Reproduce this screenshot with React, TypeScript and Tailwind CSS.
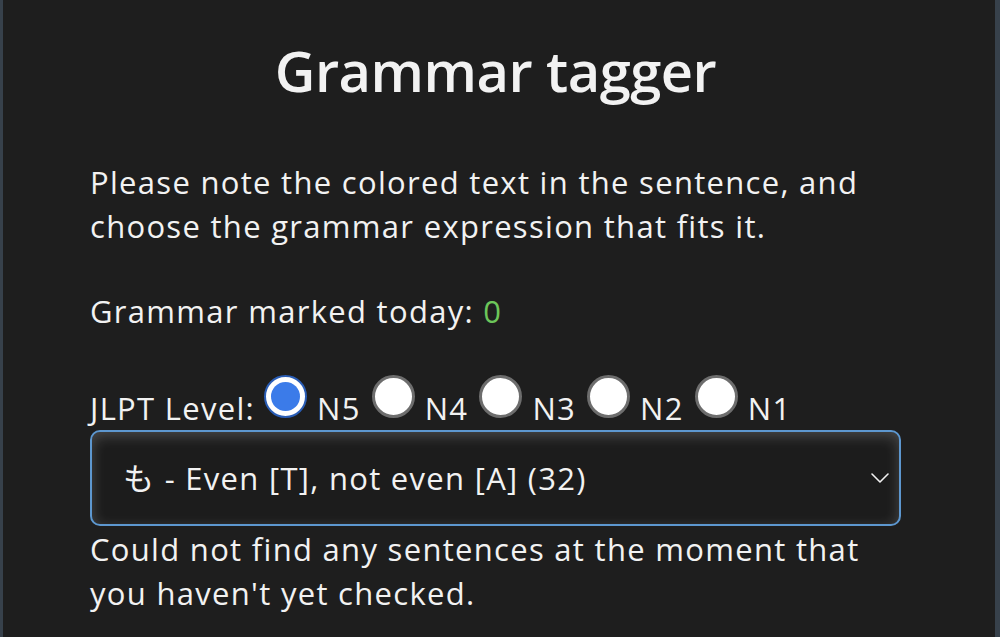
import React, { useState } from "react";

const levels = ["N5", "N4", "N3", "N2", "N1"];

function Radio({ checked }: { checked: boolean }) {
  if (checked) {
    return (
      <span className="inline-block align-baseline mb-[2px] w-[43px] h-[43px] rounded-full border-[2px] border-[#2a5db5] bg-white p-[5px]">
        <span className="block w-full h-full rounded-full bg-[#3b7be9]" />
      </span>
    );
  }
  return (
    <span className="inline-block align-baseline mb-[2px] w-[43px] h-[43px] rounded-full border-[3px] border-[#6d6d6d] bg-white" />
  );
}

export default function App() {
  const [level, setLevel] = useState("N5");

  return (
    <div className="min-h-[637px] w-full bg-[#37414b] flex">
      <div className="ml-[3px] mr-[5px] flex-1 bg-[#1e1e1e] text-[#f2f2f2] font-['Open_Sans','Noto_Sans','Noto_Sans_CJK_JP',sans-serif]">
        <div className="pl-[87px] pr-[94px]">
          <h1 className="pt-[42px] text-center text-[56px] font-semibold leading-none tracking-[-0.5px]">
            Grammar tagger
          </h1>

          <div className="text-[31px] leading-[44px] tracking-[1.3px]">
            <p className="mt-[62px]">
              Please note the colored text in the sentence, and choose the
              grammar expression that fits it.
            </p>

            <p className="mt-[41px]">
              Grammar marked today: <span className="text-[#6cc55a]">0</span>
            </p>

            <div className="mt-[42px]">
              <span className="mr-[9px]">JLPT Level:</span>
              {levels.map((l) => (
                <span
                  key={l}
                  className="cursor-pointer"
                  onClick={() => setLevel(l)}
                >
                  <Radio checked={level === l} />
                  <span className="ml-[10px] mr-[11px]">{l}</span>
                </span>
              ))}
            </div>

            <div className="h-[96px] rounded-[10px] border-[2px] border-[#5d97cf] bg-[#1c1c1c] shadow-[inset_0_4px_14px_rgba(255,255,255,0.2)] flex items-center pl-[31px] pr-[9px]">
              <span className="flex-1">も - Even [T], not even [A] (32)</span>
              <svg
                width="20"
                height="12"
                viewBox="0 0 20 12"
                fill="none"
                stroke="#f2f2f2"
                strokeWidth="1.6"
                strokeLinecap="round"
                strokeLinejoin="round"
              >
                <path d="M2 2 L10 10 L18 2" />
              </svg>
            </div>

            <p className="mt-[1px]">
              Could not find any sentences at the moment that you haven't yet
              checked.
            </p>
          </div>
        </div>
      </div>
    </div>
  );
}
